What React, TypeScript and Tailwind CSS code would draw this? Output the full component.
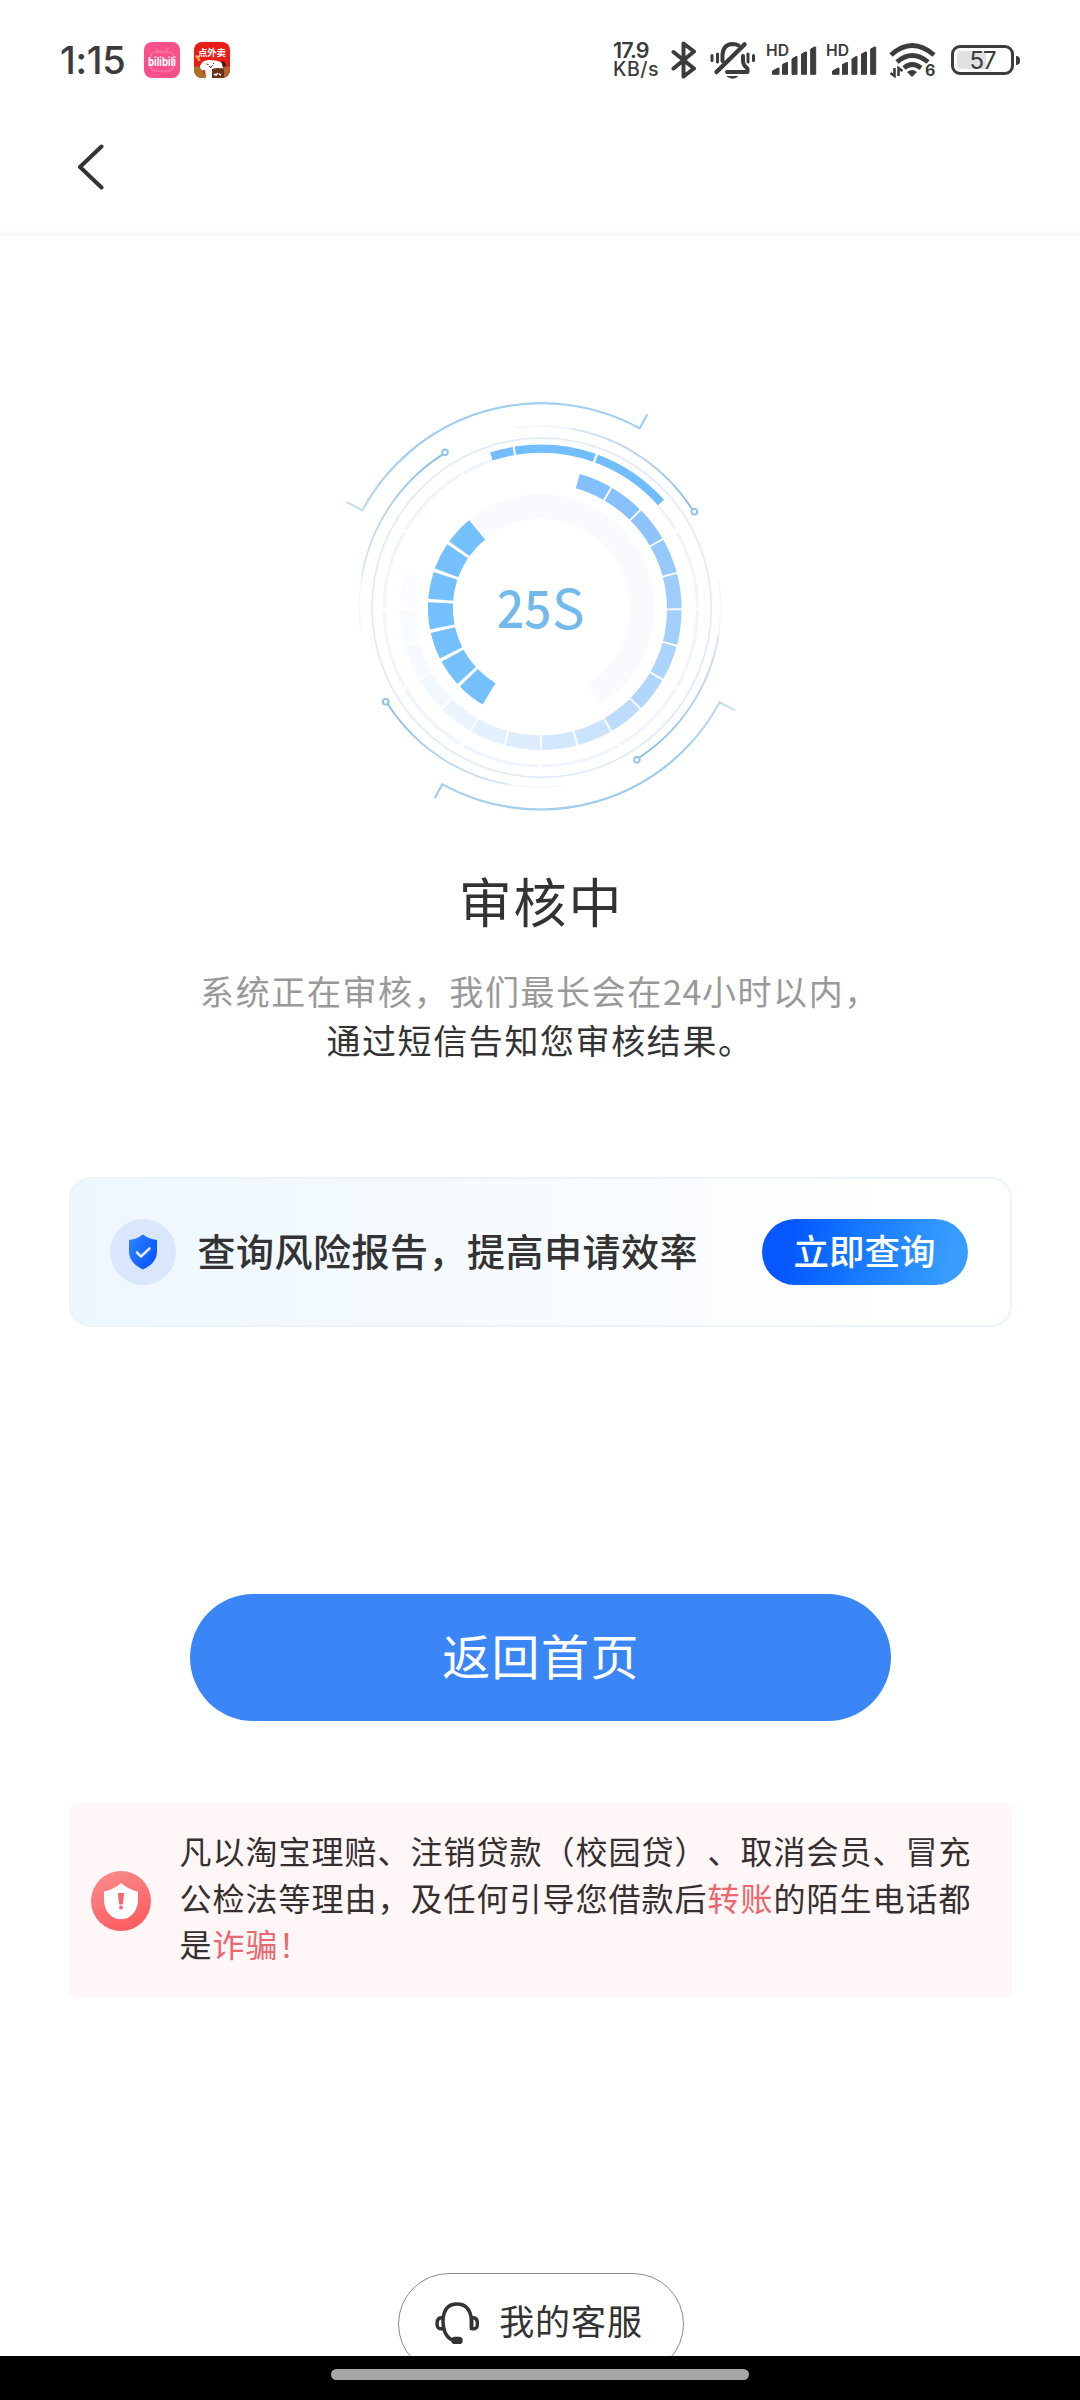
const GAUGE_TICKS = [
  '#84c0fd', '#88c2fd', '#8dc4fc', '#95c9fc', '#9ccdfd', '#a2cffd', '#acd5fe', '#b0d6fd',
  '#bddcfd', '#cae3fd', '#d4e8fd', '#dcecfd', '#e3f0fe', '#ebf4fe', '#f1f8fe', '#f6fafe',
  '#f8fbff', '#fafcff',
];

const polar = (cx: number, cy: number, r: number, deg: number) => {
  const rad = (deg * Math.PI) / 180;
  return [(cx + r * Math.sin(rad)).toFixed(2), (cy - r * Math.cos(rad)).toFixed(2)];
};

// angles are clockwise, 0 is the top of the dial
const arc = (cx: number, cy: number, r: number, from: number, to: number) => {
  const [x1, y1] = polar(cx, cy, r, from);
  const [x2, y2] = polar(cx, cy, r, to);
  return `M${x1} ${y1}A${r} ${r} 0 ${to - from > 180 ? 1 : 0} 1 ${x2} ${y2}`;
};

const Orbit = ({ angle }: { angle: number }) => (
  <g transform={`rotate(${angle} 630 680)`} fill="none">
    <path d={arc(630, 680, 542, 9, 57.3)} stroke="url(#orbit)" strokeWidth="5.5" />
    <path d={arc(630, 680, 542, -8, 10)} stroke="#f1f5fc" strokeWidth="4" />
    <circle cx="1093" cy="395" r="8.5" stroke="#8ac2ec" strokeWidth="5.5" />
  </g>
);

const Gauge = () => (
  <svg viewBox="0 0 1260 1320" className="mt-[144px] h-[440px] w-[420px] shrink-0" fill="none">
    <defs>
      <linearGradient id="orbit" gradientUnits="userSpaceOnUse" x1="700" y1="140" x2="1090" y2="390">
        <stop offset="0" stopColor="#dfeaf7" />
        <stop offset="1" stopColor="#84bce5" />
      </linearGradient>
      <linearGradient id="bracket" gradientUnits="userSpaceOnUse" x1="50" y1="0" x2="955" y2="0">
        <stop offset="0" stopColor="#cbe0ec" />
        <stop offset="0.2" stopColor="#a0cdec" />
        <stop offset="1" stopColor="#a0cff0" />
      </linearGradient>
    </defs>

    <g stroke="url(#bracket)" strokeWidth="6.5">
      <path d="M50 366L97 391A611 611 0 0 1 929 145L952 103" />
      <path d="M50 366L97 391A611 611 0 0 1 929 145L952 103" transform="rotate(180 633 679)" />
    </g>

    {[-90, 0, 89.3, 180].map((angle) => <Orbit key={angle} angle={angle} />)}
    <circle cx="635" cy="683" r="509" stroke="#e0eaf8" strokeWidth="5" />
    {Array.from({ length: 12 }, (_, i) => (
      <path key={i} d={arc(632, 688, 470, i * 30 + 0.6, i * 30 + 29.4)} stroke="#eff4fd" strokeWidth="9" />
    ))}

    <path d={arc(633, 688, 482, -18, 48.3)} stroke="#fff" strokeWidth="36" />
    <g stroke="#72bdfd" strokeWidth="25">
      <path d={arc(633, 688, 482, -18, -9.9)} />
      <path d={arc(633, 688, 482, -9.2, 19.4)} />
      <path d={arc(633, 688, 482, 20.2, 48.3)} />
    </g>

    {GAUGE_TICKS.map((color, i) => (
      <path
        key={color}
        d={arc(633, 688, 400, i === 0 ? 16 : i * 15 + 15.4, i * 15 + 29.6)}
        stroke={color}
        strokeWidth="44"
      />
    ))}

    <path d={arc(633, 683, 304, -39.4, 148.6)} stroke="#f8fafe" strokeWidth="73" />
    {Array.from({ length: 7 }, (_, i) => (
      <path
        key={i}
        d={arc(633, 683, 302, -148.9 + i * 15.64 + (i === 0 ? 0 : 0.9), -148.9 + (i + 1) * 15.64 - (i === 6 ? 0 : 0.9))}
        stroke="#73c0fd"
        strokeWidth="75"
      />
    ))}

    <g fill="#74b9ec" className="font-['Noto_Sans_CJK_SC',sans-serif]">
      <text x="501" y="743" fontSize="156" fontWeight="500" textLength="164" lengthAdjust="spacingAndGlyphs">25</text>
      <text x="666" y="746" fontSize="162" fontWeight="400" textLength="98" lengthAdjust="spacingAndGlyphs">S</text>
    </g>
  </svg>
);

const Signal = () => (
  <svg viewBox="0 0 52 36" className="h-9 w-[52px] overflow-visible" fill="#3c3c3c">
    <text x="0" y="14" fontSize="15.5" fontWeight="600" textLength="23" lengthAdjust="spacingAndGlyphs" className="font-['Inter',sans-serif]">HD</text>
    <g stroke="#3c3c3c" strokeWidth="1" strokeLinejoin="round">
      <path d="M6.500 29l5.500-3h1v6.300H6.500z" />
      <path d="M16.500 22.500l4-2h1v11.800h-5z" />
      <path d="M26 17l4-2.500h1v17.800h-5z" />
      <path d="M35.500 12l4-2h1v22.300h-5z" />
      <path d="M44.700 7l4-2h1v27.300h-5z" />
    </g>
  </svg>
);

const StatusBar = () => (
  <div className="flex h-[120px] shrink-0 items-center justify-between pr-[60px] pl-[60px] font-['Inter','Noto_Sans_CJK_SC',sans-serif] text-[#3c3c3c]">
    <div className="flex items-center">
      <span className="w-[84px] text-[38px] leading-[48px] font-medium tracking-[-0.300px]">1:15</span>
      <svg viewBox="0 0 36 36" className="size-9 overflow-visible" fill="none">
        <rect width="36" height="36" rx="8" fill="#f9508a" />
        <rect x="6.500" y="10" width="23" height="19" rx="5" stroke="#fb83ab" strokeWidth="1.200" />
        <path d="M12 6l3 4M24 6l-3 4" stroke="#fb83ab" strokeWidth="1.200" />
        <text x="4" y="24" fontSize="12" fontWeight="700" fill="#fff" textLength="28" lengthAdjust="spacingAndGlyphs">bilibili</text>
      </svg>
      <svg viewBox="0 0 36 36" className="ml-[14px] size-9 overflow-visible">
        <defs>
          <clipPath id="app"><rect width="36" height="36" rx="8" /></clipPath>
        </defs>
        <g clipPath="url(#app)">
          <rect width="36" height="36" fill="#e81d17" />
          <path d="M0 25q5-2 8 2l4 9H0z" fill="#a8742c" />
          <path d="M28 25h8v11H26z" fill="#b5622a" />
          <path d="M1.500 14q3 1 4 5" stroke="#f2a13c" strokeWidth="2.500" fill="none" />
          <path d="M6 24q2-6 9-6 9 0 13 3l1 5-8 3-2 7h-7l-1-8q-5 1-5-4z" fill="#fff" />
          <path d="M27 19q5 0 5 5l-3 1z" fill="#3a2018" />
          <path d="M12.500 22l2 .5M19 21l1 1M15 24l2 1.500 1.500-2" stroke="#3a2018" strokeWidth="1" fill="none" />
          <path d="M18 27q6-2 12 0v9H18z" fill="#6b3217" />
          <path d="M20 32l2 1 2-2M25 32l2 1" stroke="#fff" strokeWidth="1.500" fill="none" />
        </g>
        <text x="4" y="14" fontSize="9.5" fontWeight="700" fill="#fff" textLength="28" className="font-['Noto_Sans_CJK_SC',sans-serif]">点外卖</text>
      </svg>
    </div>

    <div className="flex items-center">
      <div className="-ml-px flex w-[58px] flex-col leading-[19px] font-semibold">
        <span className="text-[21.500px] tracking-[-0.900px]">17.9</span>
        <span className="text-[19.500px] font-medium tracking-[0.500px]">KB/s</span>
      </div>
      <svg viewBox="0 0 26 38" className="h-[38px] w-[26px]" fill="none" stroke="#3c3c3c" strokeWidth="4" strokeLinejoin="round" strokeLinecap="round">
        <path d="M2.500 11L23 27.500 12.500 35.500V2.500L23 10.500 2.500 27.500" />
      </svg>
      <svg viewBox="0 0 46 38" className="ml-[13px] h-[38px] w-[46px]" fill="none" stroke="#3c3c3c" strokeWidth="4" strokeLinecap="round">
        <path d="M6.500 31L34.500 3.500" strokeWidth="4.500" />
        <path d="M12.500 20V14Q13 3.500 22.500 3q3.500 0 6 1.500M33 15v5q0 4 4.500 7.500V31H17" strokeLinejoin="round" />
        <path d="M17.500 35.500h10q-5 3.500-10 0z" fill="#3c3c3c" strokeWidth="1" />
        <path d="M2 14.500v5M7.500 13v8M38 13v8M43.500 14.500v5" strokeWidth="3" />
      </svg>
      <div className="ml-[10px] flex gap-2">
        <Signal />
        <Signal />
      </div>
      <svg viewBox="0 0 48 36" className="ml-[11px] h-9 w-12 overflow-visible" fill="none" stroke="#3c3c3c" strokeWidth="4.800">
        <path d="M2 13Q23-6 45 13M8 20Q23 7 39 20M15 26q8-7 17 0" />
        <path d="M18 30q5-4 10 0l-5 5z" fill="#3c3c3c" stroke="none" />
        <path d="M5.500 26v8l-4-3M9.500 34v-8l4 3" strokeWidth="2.500" />
        <text x="36" y="34" fontSize="16" fontWeight="700" fill="#3c3c3c" stroke="none">6</text>
      </svg>
      <div className="ml-[14px] flex h-[30px] w-[63px] items-center justify-center rounded-[9px] border-[3px] border-[#3c3c3c] p-[3px]">
        <div className="flex h-full w-full items-center justify-center rounded-[4px] bg-linear-to-r from-[#e2e2e2] from-57% to-white to-57% pt-px text-[24px] leading-none tracking-[-1px]">57</div>
      </div>
      <div className="ml-[2px] h-[9px] w-1 rounded-r-sm bg-[#3c3c3c]" />
    </div>
  </div>
);

const ReportCard = () => (
  <div className="mt-[113px] flex h-[150px] w-[943px] shrink-0 items-center rounded-[21px] border-2 border-[#ebf3fb] bg-linear-to-r from-[#edf7ff] via-[#f7fbff] via-50% to-white to-90% pr-[42px] pl-[39px]">
    <div className="flex size-[66px] items-center justify-center rounded-full bg-[#dae6fb]">
      <svg viewBox="0 0 28 36" className="h-9 w-7" fill="none">
        <defs>
          <linearGradient id="shield" x1="0" y1="0" x2="1" y2="0.600">
            <stop offset="0" stopColor="#2f86ff" />
            <stop offset="1" stopColor="#0a55ff" />
          </linearGradient>
        </defs>
        <path d="M14 .5Q20 5 28 6v11q0 12-14 18.500Q0 29 0 17V6Q8 5 14 .5z" fill="url(#shield)" />
        <path d="M8 18.500l4 4 8.500-8" stroke="#d9e8ff" strokeWidth="2.600" strokeLinecap="round" strokeLinejoin="round" />
      </svg>
    </div>
    <p className="-mt-1 ml-[22px] flex-1 text-[38px] leading-[50px] font-medium tracking-[0.5px] whitespace-nowrap">查询风险报告，提高申请效率</p>
    <button type="button" className="flex h-[66px] w-[206px] items-center justify-center rounded-full bg-linear-100 from-[#0658fe] from-15% to-[#389dff] to-90% pb-1 text-[35.500px] leading-none font-medium text-white">立即查询</button>
  </div>
);

const FraudWarning = () => (
  <div className="mt-[82px] flex h-[195px] w-[943px] shrink-0 items-center rounded-lg bg-[#fff6f7] pl-[22px]">
    <svg viewBox="0 0 60 60" className="size-[60px]">
      <defs>
        <linearGradient id="alert" x1="0" y1="0" x2="0.400" y2="1">
          <stop offset="0" stopColor="#f98e8e" />
          <stop offset="1" stopColor="#fc5f62" />
        </linearGradient>
      </defs>
      <circle cx="30" cy="30" r="30" fill="url(#alert)" />
      <path d="M30 12Q37 18.500 47 20.500V28q0 14-11.500 19.500-5.500 1.500-11 0Q13 42 13 28V20.500Q23 18.500 30 12z" fill="#fff" />
      <path d="M26.800 22h6.400l-1.400 11.500h-3.600z" fill="#f4696b" />
      <circle cx="30" cy="36.500" r="2" fill="#f4696b" />
    </svg>
    <p className="-mt-[7px] ml-[29px] w-[800px] text-[32px] leading-[46.500px] tracking-[1px] whitespace-nowrap text-[#352f30] [font-kerning:none] [text-spacing-trim:space-all]">
      凡以淘宝理赔、注销贷款（校园贷）、取消会员、冒充
      <br />
      公检法等理由，及任何引导您借款后
      <span className="text-[#e9686f]">转账</span>
      的陌生电话都
      <br />
      是
      <span className="text-[#e9686f]">诈骗！</span>
    </p>
  </div>
);

const App = () => (
  <div className="flex h-[2400px] w-[1080px] flex-col overflow-hidden bg-white font-['Noto_Sans_CJK_SC',sans-serif] text-[#333]">
    <StatusBar />
    <header className="flex h-[111px] shrink-0 items-start pt-6 pl-[77px]">
      <svg viewBox="0 0 27 46" className="h-[46px] w-[27px]" fill="none" stroke="#333" strokeWidth="4" strokeLinecap="round" strokeLinejoin="round">
        <path d="M24.500 2.500L3 23l21.500 20.500" />
      </svg>
    </header>
    <div className="h-[5px] shrink-0 bg-[#f8f9fc]" />

    <main className="flex h-[2120px] shrink-0 flex-col items-center overflow-hidden">
      <Gauge />
      <h1 className="mt-[50px] pl-[2px] text-[53px] leading-[60px] tracking-[1.900px]">审核中</h1>
      <p className="mt-9 text-center text-[34px] leading-[49px] tracking-[1.600px]">
        <span className="text-[#999]">
          系统正在审核，我们最长会在
          <span className="tracking-[0.600px]">24</span>
          小时以内，
        </span>
        <br />
        通过短信告知您审核结果。
      </p>
      <ReportCard />
      <button type="button" className="mt-[267px] flex h-[127px] w-[701px] shrink-0 items-center justify-center rounded-full bg-[#3a86f6] pb-[7px] pl-[2px] text-[48px] leading-none tracking-[1.400px] text-white">返回首页</button>
      <FraudWarning />
      <button type="button" className="mt-[275px] ml-[2px] flex h-[102px] w-[286px] shrink-0 items-center justify-center rounded-full border border-[#8c8c8c] pr-1 pb-[2px] text-[35px] leading-none tracking-[0.900px]">
        <svg viewBox="0 0 44 42" className="mr-5 h-[42px] w-11" fill="none" stroke="#333" strokeWidth="3.500">
          <path d="M20 39Q8 36 8 18 9 2 22 2t14.500 16v8" />
          <path d="M8 16q-6-1-6 5.500T8 26.500M36.500 16q6-1 6 5.500t-6 5z" />
          <rect x="18" y="36.500" width="8" height="4" rx="2" fill="#333" />
        </svg>
        <span className="-mt-[7px]">我的客服</span>
      </button>
    </main>
    <footer className="flex h-11 shrink-0 items-start justify-center bg-black pt-[13px]">
      <div className="h-[11px] w-[418px] rounded-full bg-[#a6a6a6]" />
    </footer>
  </div>
);

export default App;
